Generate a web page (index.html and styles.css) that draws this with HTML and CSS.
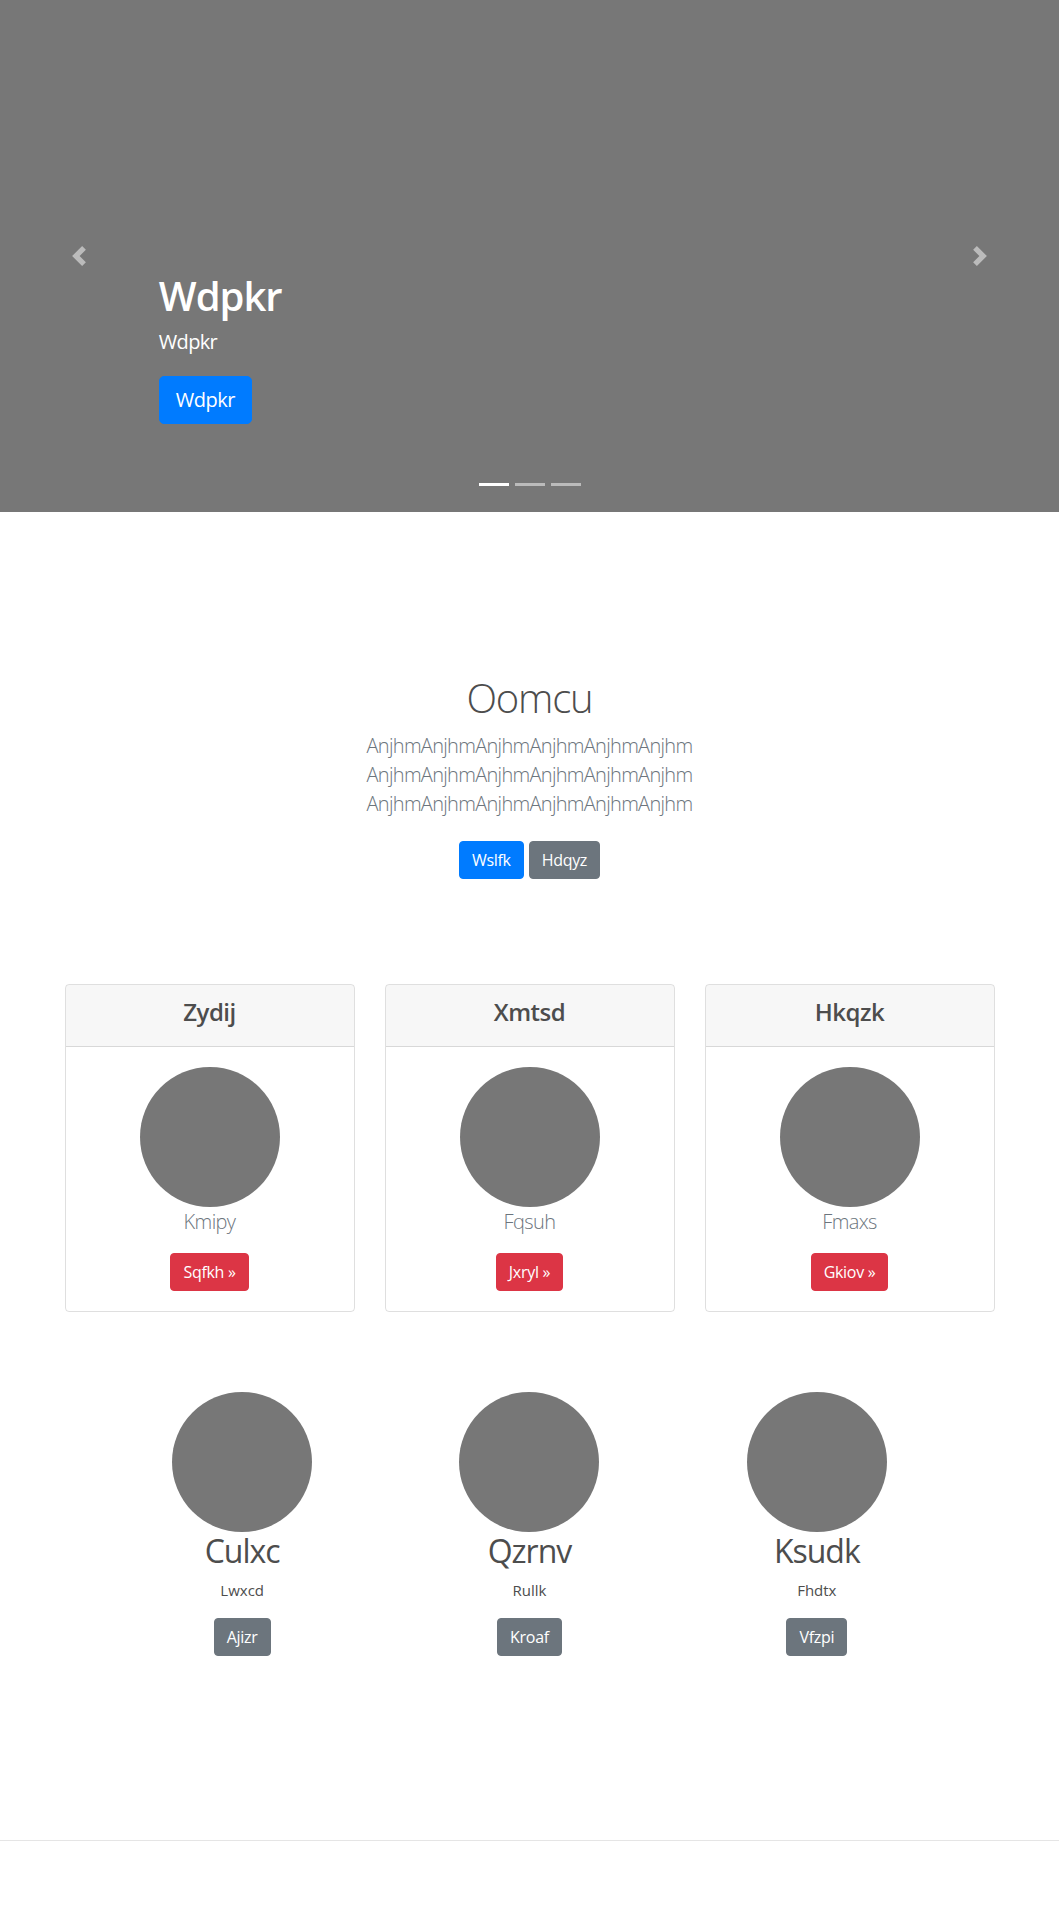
FILE: index.html
```html
<!DOCTYPE html>
<html lang="en">
<head>
<meta charset="utf-8">
<title>Carousel</title>
<link rel="stylesheet" href="styles.css">
</head>
<body>
<div class="carousel">
  <a class="control" href="#" aria-label="Previous">
    <svg class="control-icon" viewBox="0 0 8 8" width="20" height="20"><path d="M5.25 0l-4 4 4 4 1.5-1.5-2.5-2.5 2.5-2.5-1.5-1.5z"/></svg>
  </a>
  <div class="caption">
    <h1 class="caption-title">Wdpkr</h1>
    <p class="caption-text">Wdpkr</p>
    <p class="caption-action"><a class="btn btn-lg btn-primary" href="#">Wdpkr</a></p>
  </div>
  <a class="control" href="#" aria-label="Next">
    <svg class="control-icon" viewBox="0 0 8 8" width="20" height="20"><path d="M2.75 0l-1.5 1.5 2.5 2.5-2.5 2.5 1.5 1.5 4-4-4-4z"/></svg>
  </a>
  <ol class="indicators">
    <li class="indicator active"></li>
    <li class="indicator"></li>
    <li class="indicator"></li>
  </ol>
</div>

<section class="intro">
  <h1 class="intro-title">Oomcu</h1>
  <p class="intro-lead">AnjhmAnjhmAnjhmAnjhmAnjhmAnjhm AnjhmAnjhmAnjhmAnjhmAnjhmAnjhm AnjhmAnjhmAnjhmAnjhmAnjhmAnjhm</p>
  <p class="intro-actions"><a class="btn btn-primary" href="#">Wslfk</a> <a class="btn btn-secondary" href="#">Hdqyz</a></p>
</section>

<div class="cards">
  <div class="card">
    <div class="card-header"><h4 class="card-title">Zydij</h4></div>
    <div class="card-body">
      <div class="circle"></div>
      <p class="card-lead">Kmipy</p>
      <a class="btn btn-danger" href="#">Sqfkh &raquo;</a>
    </div>
  </div>
  <div class="card">
    <div class="card-header"><h4 class="card-title">Xmtsd</h4></div>
    <div class="card-body">
      <div class="circle"></div>
      <p class="card-lead">Fqsuh</p>
      <a class="btn btn-danger" href="#">Jxryl &raquo;</a>
    </div>
  </div>
  <div class="card">
    <div class="card-header"><h4 class="card-title">Hkqzk</h4></div>
    <div class="card-body">
      <div class="circle"></div>
      <p class="card-lead">Fmaxs</p>
      <a class="btn btn-danger" href="#">Gkiov &raquo;</a>
    </div>
  </div>
</div>

<div class="marketing">
  <div class="feature">
    <div class="circle"></div>
    <h2 class="feature-title">Culxc</h2>
    <p class="feature-text">Lwxcd</p>
    <a class="btn btn-secondary" href="#">Ajizr</a>
  </div>
  <div class="feature">
    <div class="circle"></div>
    <h2 class="feature-title">Qzrnv</h2>
    <p class="feature-text">Rullk</p>
    <a class="btn btn-secondary" href="#">Kroaf</a>
  </div>
  <div class="feature">
    <div class="circle"></div>
    <h2 class="feature-title">Ksudk</h2>
    <p class="feature-text">Fhdtx</p>
    <a class="btn btn-secondary" href="#">Vfzpi</a>
  </div>
</div>

<hr class="divider">
</body>
</html>
```

FILE: styles.css
```css
* { box-sizing: border-box; }

html, body { margin: 0; padding: 0; }

body {
  font-family: "Open Sans", "Noto Sans", "Liberation Sans", sans-serif;
  font-size: 16px;
  line-height: 1.5;
  color: #4d4d4d;
  background: #fff;
}

h1, h2, h4, p { margin: 0; }

/* Buttons */
.btn {
  display: inline-block;
  font-size: 16px;
  line-height: 24px;
  padding: 6px 12px;
  border: 1px solid transparent;
  border-radius: 4px;
  color: #fff;
  text-decoration: none;
  vertical-align: middle;
  letter-spacing: -0.3px;
}
.btn-lg {
  font-size: 20px;
  line-height: 30px;
  padding: 8px 16px;
  border-radius: 5px;
  letter-spacing: -0.5px;
}
.btn-primary { background: #007bff; border-color: #007bff; }
.btn-secondary { background: #6c757d; border-color: #6c757d; }
.btn-danger { background: #dc3545; border-color: #dc3545; }

/* Carousel */
.carousel {
  position: relative;
  height: 512px;
  background: #777;
  display: flex;
}
.control {
  width: 15%;
  flex: none;
  display: flex;
  align-items: center;
  justify-content: center;
}
.control-icon {
  fill: #fff;
  opacity: .5;
  display: block;
}
.caption {
  flex: 1;
  display: flex;
  flex-direction: column;
  justify-content: flex-end;
  padding-bottom: 88px;
  color: #fff;
}
.caption-title {
  font-size: 40px;
  line-height: 48px;
  font-weight: 600;
  letter-spacing: -1px;
  margin-bottom: 6px;
}
.caption-text {
  font-size: 20px;
  line-height: 30px;
  letter-spacing: -0.7px;
  margin-bottom: 19px;
  padding-top: 1px;
}
.caption-action { display: flex; }

.indicators {
  position: absolute;
  left: 0;
  right: 0;
  top: 483px;
  margin: 0;
  padding: 0;
  list-style: none;
  display: flex;
  justify-content: center;
  gap: 6px;
}
.indicator {
  width: 30px;
  height: 3px;
  background: rgba(255, 255, 255, .5);
}
.indicator.active { background: #fff; }

/* Intro */
.intro {
  max-width: 450px;
  margin: 0 auto;
  padding-top: 162px;
  text-align: center;
}
.intro-title {
  font-size: 40px;
  line-height: 48px;
  font-weight: 300;
  letter-spacing: -1.2px;
  margin-bottom: 9px;
}
.intro-lead {
  font-size: 20px;
  line-height: 29px;
  font-weight: 300;
  letter-spacing: -0.7px;
  color: #6c757d;
  margin-bottom: 23px;
}
.intro-actions {
  display: flex;
  justify-content: center;
  gap: 5px;
}

/* Cards */
.cards {
  width: 930px;
  margin: 105px auto 0;
  display: grid;
  grid-template-columns: repeat(3, 1fr);
  gap: 30px;
}
.card {
  border: 1px solid rgba(0, 0, 0, .125);
  border-radius: 4px;
  text-align: center;
  overflow: hidden;
}
.card-header {
  background: rgba(0, 0, 0, .03);
  border-bottom: 1px solid rgba(0, 0, 0, .125);
  padding: 12px 20px;
}
.card-title {
  font-size: 24px;
  line-height: 29px;
  font-weight: 600;
  letter-spacing: -0.5px;
  margin-bottom: 8px;
}
.card-body {
  padding: 20px;
}
.circle {
  width: 140px;
  height: 140px;
  border-radius: 50%;
  background: #777;
  margin: 0 auto;
}
.card-lead {
  font-size: 20px;
  line-height: 30px;
  font-weight: 300;
  letter-spacing: -0.6px;
  color: #6c757d;
  margin-bottom: 16px;
}

/* Marketing */
.marketing {
  width: 862px;
  margin: 80px auto 0;
  display: grid;
  grid-template-columns: repeat(3, 1fr);
  text-align: center;
}
.feature-title {
  font-size: 32px;
  line-height: 38px;
  font-weight: 400;
  letter-spacing: -1px;
  margin-bottom: 8px;
}
.feature-text {
  font-size: 15px;
  line-height: 24px;
  margin-bottom: 16px;
}

.divider {
  margin: 184px 0 0;
  border: 0;
  border-top: 1px solid rgba(0, 0, 0, .1);
}
```
